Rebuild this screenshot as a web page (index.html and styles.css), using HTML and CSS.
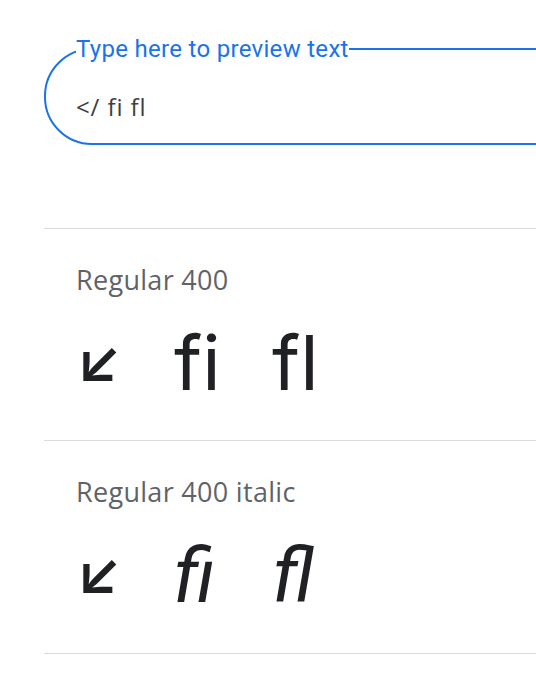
FILE: index.html
```html
<!DOCTYPE html>
<html lang="en">
<head>
<meta charset="utf-8">
<title>Preview</title>
<link rel="stylesheet" href="styles.css">
</head>
<body>
<main class="page">
  <fieldset class="preview-field">
    <legend class="preview-label">Type here to preview text</legend>
    <input class="preview-input" type="text" value="&lt;/ fi fl">
  </fieldset>
  <div class="spacer"></div>
  <section class="style-row">
    <h2 class="style-name">Regular 400</h2>
    <p class="sample"><span class="g arrow">↙</span><span class="g">fi</span><span class="g">fl</span></p>
  </section>
  <section class="style-row">
    <h2 class="style-name">Regular 400 italic</h2>
    <p class="sample italic"><span class="g arrow">↙</span><span class="g">fi</span><span class="g">fl</span></p>
  </section>
</main>
</body>
</html>
```

FILE: styles.css
```css
html, body {
  margin: 0;
  padding: 0;
  background: #ffffff;
  overflow: hidden;
}
.page {
  padding: 35px 0 0 44px;
  font-family: Roboto, "Liberation Sans", sans-serif;
}
.preview-field {
  margin: 0 -40px 0 0;
  padding: 0 0 0 30px;
  border: 2px solid #1a73e8;
  border-radius: 48px 0 0 48px;
  min-width: 0;
}
.preview-label {
  padding: 0;
  font-size: 24px;
  line-height: 28px;
  letter-spacing: 0.3px;
  color: #1a73e8;
}
.preview-input {
  display: block;
  box-sizing: border-box;
  width: 100%;
  height: 80px;
  margin: 0;
  padding: 6px 0 0 0;
  border: 0;
  outline: none;
  background: transparent;
  font-family: "Open Sans", Roboto, sans-serif;
  font-size: 24px;
  letter-spacing: 0.9px;
  color: #3c4043;
}
.spacer {
  height: 83px;
}
.style-row {
  border-top: 1px solid #dadce0;
  padding: 35px 0 0 32px;
  height: 176px;
}
.style-row:last-child {
  height: 177px;
  border-bottom: 1px solid #dadce0;
}
.style-name {
  margin: 0;
  font-family: "Open Sans", Roboto, sans-serif;
  font-size: 27px;
  line-height: 32px;
  letter-spacing: 0.3px;
  font-weight: 400;
  color: #5f6368;
}
.sample {
  margin: 18px 0 0 0;
  font-family: Inter, Roboto, sans-serif;
  font-size: 76px;
  line-height: 90px;
  font-weight: 400;
  color: #202124;
  white-space: nowrap;
}
.g {
  display: inline-block;
  width: 98px;
}
.arrow {
  font-size: 60px;
  font-weight: 600;
  width: 98px;
  vertical-align: 9px;
}
.italic {
  font-family: Roboto, Inter, sans-serif;
  font-style: italic;
  font-weight: 400;
}
.italic .arrow {
  font-family: Inter, sans-serif;
  font-style: normal;
  font-weight: 600;
}
```
